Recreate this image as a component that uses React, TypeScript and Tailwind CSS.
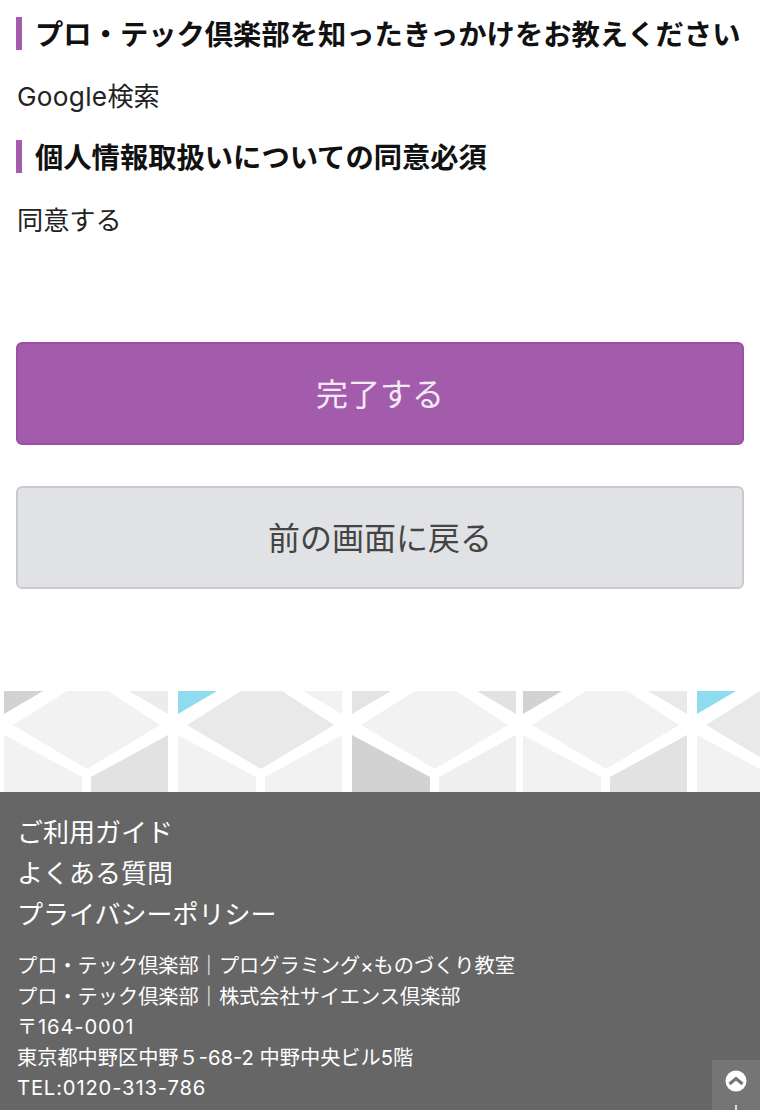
const font = 'Inter, "Noto Sans CJK JP", "Noto Sans", sans-serif';

type Tile = { x: number; tl: string; d: string; tr: string; bl: string; br: string };
const tiles: Tile[] = [
  { x: 4, tl: "#d2d2d2", d: "#f2f2f2", tr: "#ececec", bl: "#f2f2f2", br: "#e2e2e2" },
  { x: 178, tl: "#8fdcf0", d: "#e9e9e9", tr: "#f2f2f2", bl: "#f2f2f2", br: "#f2f2f2" },
  { x: 352, tl: "#e4e4e4", d: "#f2f2f2", tr: "#e2e2e2", bl: "#d2d2d2", br: "#efefef" },
  { x: 523, tl: "#d2d2d2", d: "#f2f2f2", tr: "#e9e9e9", bl: "#f2f2f2", br: "#e2e2e2" },
  { x: 697, tl: "#8fdcf0", d: "#e9e9e9", tr: "#f2f2f2", bl: "#f2f2f2", br: "#f2f2f2" },
];

function Pattern() {
  return (
    <svg width="760" height="101" viewBox="0 0 760 101" className="block">
      {tiles.map((t) => (
        <g key={t.x} transform={`translate(${t.x} 0)`}>
          <polygon points="0,0 39,0 0,23" fill={t.tl} />
          <polygon points="125,0 164,0 164,23" fill={t.tr} />
          <polygon points="9,34 63,0 104,0 156,34 83,78" fill={t.d} />
          <polygon points="0,44 78,86 78,101 0,101" fill={t.bl} />
          <polygon points="87,86 164,44 164,101 87,101" fill={t.br} />
        </g>
      ))}
    </svg>
  );
}

function Heading({ children }: { children: string }) {
  return (
    <h2 className="flex items-center gap-[13px] h-[33px] text-[28.3px] font-bold leading-[33px] text-[#111] whitespace-nowrap">
      <span className="w-[6px] h-[33px] bg-[#a45cab] shrink-0" />
      <span className="pt-[3px]">{children}</span>
    </h2>
  );
}

export default function App() {
  return (
    <div className="relative w-[760px] h-[1110px] overflow-hidden bg-white" style={{ fontFamily: font }}>
      <main className="px-4 pt-[17px]">
        <Heading>プロ・テック倶楽部を知ったきっかけをお教えください</Heading>
        <p className="mt-[30px] pl-px h-[33px] text-[26.2px] leading-[33px] text-[#222]">
          <span className="tracking-[0.3px]">Google</span>検索
        </p>
        <div className="mt-[27px]">
          <Heading>個人情報取扱いについての同意必須</Heading>
        </div>
        <p className="mt-[31px] pl-px h-[33px] text-[26.2px] leading-[33px] text-[#222]">同意する</p>
        <button className="mt-[105px] pt-[3px] flex items-center justify-center w-[728px] h-[103px] rounded-[6px] border-2 border-[#9c4fa5] bg-[#a35cab] text-[32px] text-[#f4eaf5]">
          完了する
        </button>
        <button className="mt-[41px] pt-[2px] flex items-center justify-center w-[728px] h-[103px] rounded-[6px] border-2 border-[#c9cacc] bg-[#e1e2e5] text-[32px] text-[#444]">
          前の画面に戻る
        </button>
      </main>
      <div className="mt-[102px]">
        <Pattern />
      </div>
      <footer className="h-[318px] bg-[#666666] pl-[17px] pt-[20px] text-white">
        <ul className="text-[26px] leading-[41px]">
          <li>ご利用ガイド</li>
          <li>よくある質問</li>
          <li>プライバシーポリシー</li>
        </ul>
        <div className="mt-[16px] text-[20.2px] leading-[30.5px] whitespace-nowrap">
          <p>プロ・テック倶楽部｜プログラミング×ものづくり教室</p>
          <p>プロ・テック倶楽部｜株式会社サイエンス倶楽部</p>
          <p className="tracking-[0.85px]">〒164-0001</p>
          <p>東京都中野区中野５-68-2 中野中央ビル5階</p>
          <p className="tracking-[0.85px]">TEL:0120-313-786</p>
        </div>
      </footer>
      <div className="absolute right-0 top-[1060px] w-[48px] h-[50px] bg-[#757575] flex flex-col items-center pt-[10px]">
        <svg width="22" height="22" viewBox="0 0 22 22">
          <circle cx="11" cy="11" r="10.5" fill="#fff" />
          <path d="M4.5 14 L11 8.5 L17.5 14" fill="none" stroke="#757575" strokeWidth="3" />
        </svg>
        <span className="mt-[13px] w-[2px] h-[5px] bg-[#ddd]" />
      </div>
    </div>
  );
}
